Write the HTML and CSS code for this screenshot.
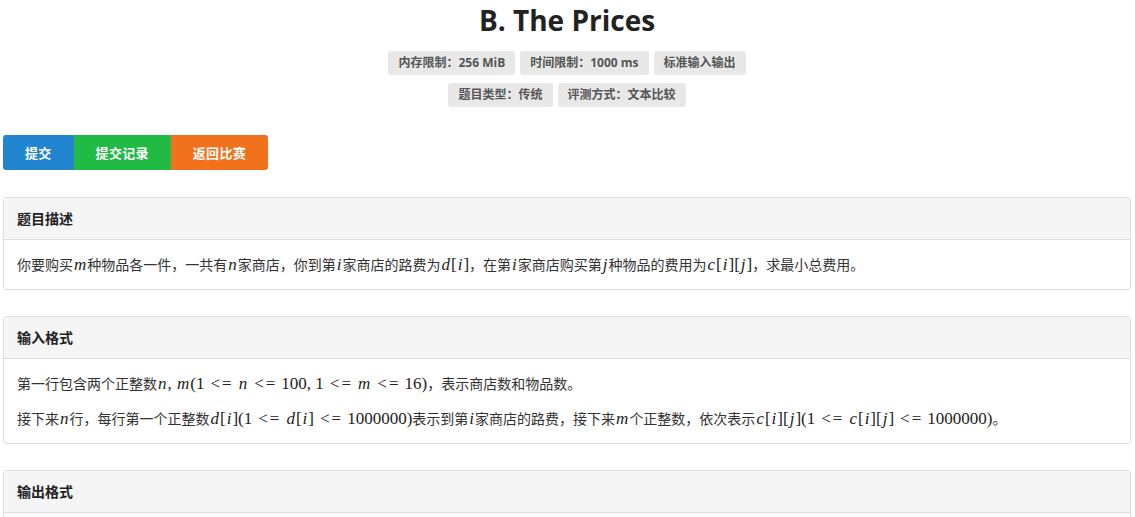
FILE: index.html
```html
<!DOCTYPE html>
<html lang="zh-CN">
<head>
    <meta charset="UTF-8">
    <meta name="viewport" content="width=device-width, initial-scale=1.0">
    <title>B. The Prices</title>
    <link rel="stylesheet" href="styles.css">
</head>
<body>

    <!-- Problem header -->
    <div class="problem-head">
        <h1 class="problem-title">B. The Prices</h1>
        <div class="badge-row">
            <span class="badge">内存限制：256 MiB</span>
            <span class="badge">时间限制：1000 ms</span>
            <span class="badge">标准输入输出</span>
        </div>
        <div class="badge-row">
            <span class="badge">题目类型：传统</span>
            <span class="badge">评测方式：文本比较</span>
        </div>
    </div>

    <!-- Action buttons -->
    <div class="btn-group">
        <a class="btn btn-blue" href="#">提交</a>
        <a class="btn btn-green" href="#">提交记录</a>
        <a class="btn btn-orange" href="#">返回比赛</a>
    </div>

    <!-- Description -->
    <div class="panel">
        <div class="panel-head">题目描述</div>
        <div class="panel-body">
            <p>你要购买<span class="mi">m</span>种物品各一件，一共有<span class="mi">n</span>家商店，你到第<span class="mi">i</span>家商店的路费为<span class="math"><span class="mi">d</span>[<span class="mi">i</span>]</span>，在第<span class="mi">i</span>家商店购买第<span class="mi">j</span>种物品的费用为<span class="math"><span class="mi">c</span>[<span class="mi">i</span>][<span class="mi">j</span>]</span>，求最小总费用。</p>
        </div>
    </div>

    <!-- Input -->
    <div class="panel">
        <div class="panel-head">输入格式</div>
        <div class="panel-body">
            <p>第一行包含两个正整数<span class="math"><span class="mi">n</span>, <span class="mi">m</span>(1<span class="op">&lt;=</span><span class="mi">n</span><span class="op">&lt;=</span>100, 1<span class="op">&lt;=</span><span class="mi">m</span><span class="op">&lt;=</span>16)</span>，表示商店数和物品数。</p>
            <p>接下来<span class="mi">n</span>行，每行第一个正整数<span class="math"><span class="mi">d</span>[<span class="mi">i</span>](1<span class="op">&lt;=</span><span class="mi">d</span>[<span class="mi">i</span>]<span class="op">&lt;=</span>1000000)</span>表示到第<span class="mi">i</span>家商店的路费，接下来<span class="mi">m</span>个正整数，依次表示<span class="math"><span class="mi">c</span>[<span class="mi">i</span>][<span class="mi">j</span>](1<span class="op">&lt;=</span><span class="mi">c</span>[<span class="mi">i</span>][<span class="mi">j</span>]<span class="op">&lt;=</span>1000000)</span>。</p>
        </div>
    </div>

    <!-- Output -->
    <div class="panel">
        <div class="panel-head">输出格式</div>
        <div class="panel-body"></div>
    </div>

</body>
</html>
```

FILE: styles.css
```css
body {
    margin: 0;
    padding: 0 4px 0 3px;
    font-family: "Open Sans", "Noto Sans CJK SC", sans-serif;
    font-size: 13px;
    color: #333;
    background: #fff;
}
.problem-head {
    display: flex;
    flex-direction: column;
    align-items: center;
    gap: 8px;
}
.problem-title {
    margin: 0 0 3px;
    font-size: 28px;
    line-height: 40px;
    font-weight: 700;
    color: #222;
}
.badge-row {
    display: flex;
    gap: 5px;
}
.badge {
    background-color: #e8e8e8;
    color: #555;
    font-family: "Open Sans", "Noto Sans CJK SC", sans-serif;
    font-size: 12px;
    font-weight: 700;
    line-height: 24px;
    padding: 0 10px;
    border-radius: 3px;
}
.btn-group {
    display: flex;
    margin: 28px 0 27px;
}
.btn {
    color: #fff;
    text-decoration: none;
    font-family: "Noto Sans CJK SC", sans-serif;
    font-weight: 700;
    font-size: 13px;
    letter-spacing: 0.3px;
    line-height: 35px;
    padding: 0 22px;
}
.btn-blue {
    background-color: #2185d0;
    border-radius: 3px 0 0 3px;
}
.btn-green {
    background-color: #21ba45;
}
.btn-orange {
    background-color: #f2711c;
    border-radius: 0 3px 3px 0;
}
.panel {
    border: 1px solid #ddd;
    border-radius: 3px;
    margin-bottom: 26px;
}
.panel-head {
    background-color: #f5f5f5;
    border-bottom: 1px solid #ddd;
    padding: 10px 13px;
    font-family: "Noto Sans CJK SC", sans-serif;
    font-size: 14px;
    font-weight: 700;
    line-height: 21px;
    color: #222;
}
.panel-body {
    padding: 14px 13px;
    min-height: 21px;
    font-family: "Noto Sans CJK SC", sans-serif;
    font-size: 14px;
    color: #333;
}
.panel-body p {
    margin: 0 0 14px;
    line-height: 21px;
}
.panel-body p:last-child {
    margin-bottom: 0;
}
.math {
    font-family: "Liberation Serif", "Times New Roman", serif;
    font-size: 17px;
    color: #222;
}
.mi {
    font-family: "Liberation Serif", "Times New Roman", serif;
    font-style: italic;
    font-size: 17px;
    color: #222;
    padding: 0 1px;
}
.op {
    font-style: normal;
    letter-spacing: 2px;
    padding: 0 4px 0 6px;
}
```
